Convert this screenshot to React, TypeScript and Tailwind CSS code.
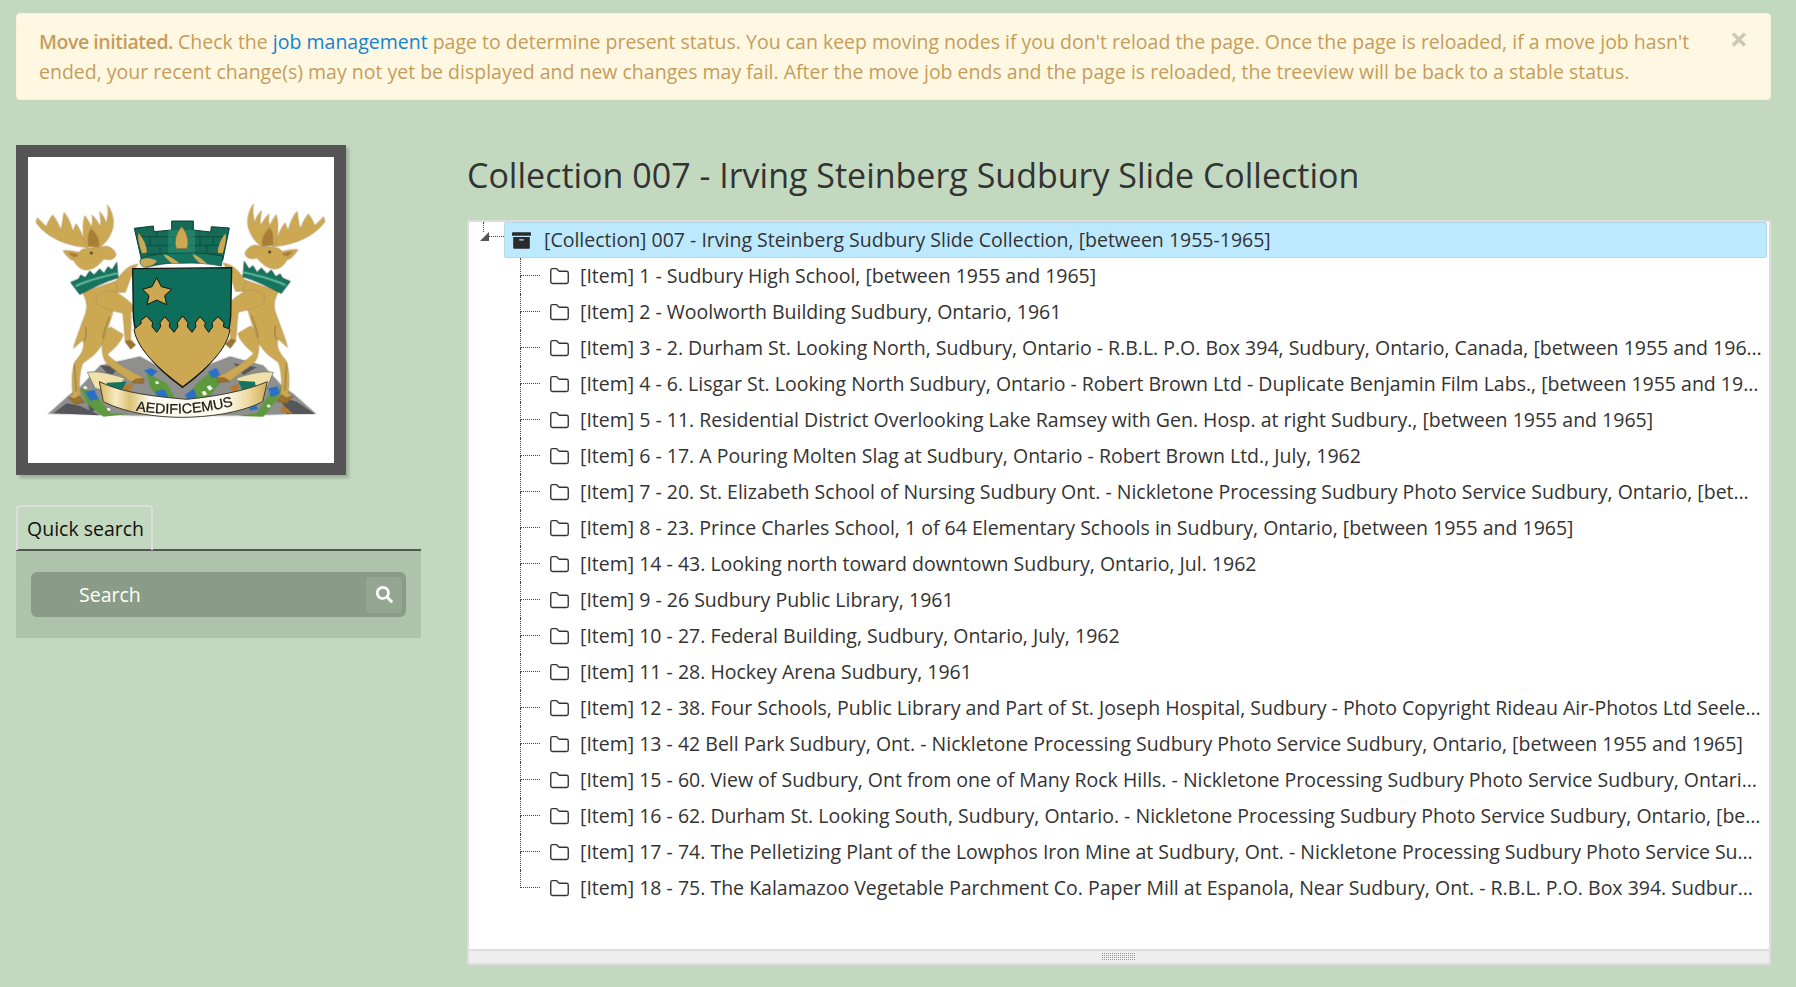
import { FaArchive, FaSearch } from "react-icons/fa";
import { Folder } from "lucide-react";

const items = [
  "[Item] 1 - Sudbury High School, [between 1955 and 1965]",
  "[Item] 2 - Woolworth Building Sudbury, Ontario, 1961",
  "[Item] 3 - 2. Durham St. Looking North, Sudbury, Ontario - R.B.L. P.O. Box 394, Sudbury, Ontario, Canada, [between 1955 and 1965]",
  "[Item] 4 - 6. Lisgar St. Looking North Sudbury, Ontario - Robert Brown Ltd - Duplicate Benjamin Film Labs., [between 1955 and 1965]",
  "[Item] 5 - 11. Residential District Overlooking Lake Ramsey with Gen. Hosp. at right Sudbury., [between 1955 and 1965]",
  "[Item] 6 - 17. A Pouring Molten Slag at Sudbury, Ontario - Robert Brown Ltd., July, 1962",
  "[Item] 7 - 20. St. Elizabeth School of Nursing Sudbury Ont. - Nickletone Processing Sudbury Photo Service Sudbury, Ontario, [between 1955 and 1965]",
  "[Item] 8 - 23. Prince Charles School, 1 of 64 Elementary Schools in Sudbury, Ontario, [between 1955 and 1965]",
  "[Item] 14 - 43. Looking north toward downtown Sudbury, Ontario, Jul. 1962",
  "[Item] 9 - 26 Sudbury Public Library, 1961",
  "[Item] 10 - 27. Federal Building, Sudbury, Ontario, July, 1962",
  "[Item] 11 - 28. Hockey Arena Sudbury, 1961",
  "[Item] 12 - 38. Four Schools, Public Library and Part of St. Joseph Hospital, Sudbury - Photo Copyright Rideau Air-Photos Ltd Seeley, Ontario",
  "[Item] 13 - 42 Bell Park Sudbury, Ont. - Nickletone Processing Sudbury Photo Service Sudbury, Ontario, [between 1955 and 1965]",
  "[Item] 15 - 60. View of Sudbury, Ont from one of Many Rock Hills. - Nickletone Processing Sudbury Photo Service Sudbury, Ontario, [between 1955 and 1965]",
  "[Item] 16 - 62. Durham St. Looking South, Sudbury, Ontario. - Nickletone Processing Sudbury Photo Service Sudbury, Ontario, [between 1955 and 1965]",
  "[Item] 17 - 74. The Pelletizing Plant of the Lowphos Iron Mine at Sudbury, Ont. - Nickletone Processing Sudbury Photo Service Sudbury, Ontario",
  "[Item] 18 - 75. The Kalamazoo Vegetable Parchment Co. Paper Mill at Espanola, Near Sudbury, Ont. - R.B.L. P.O. Box 394. Sudbury, Ontario",
];

const GOLD = "#cda853";
const GREEN = "#0f6e5c";

// one moose, left supporter; coordinates taken from a 3x crop
const Moose = () => (
  <g fill={GOLD} stroke="#a08a55" strokeWidth="1.5" strokeLinejoin="round">
    {/* rear hind leg */}
    <path d="M226 410 L248 396 L285 418 C282 436 264 456 238 478 C258 500 302 528 348 548 L345 565 L310 562 C285 538 250 522 232 500 C220 480 220 440 226 410Z" />
    {/* torso and front hind leg */}
    <path d="M163 292 C182 325 178 345 165 375 C155 405 142 435 136 460 L165 435 C172 462 158 480 142 498 C130 525 130 570 135 598 L120 606 L140 628 L168 622 L157 598 C152 570 154 530 164 505 C184 490 218 470 228 430 C240 400 250 370 260 330 C266 300 274 275 272 255Z" />
    {/* foreleg on the shield top */}
    <path d="M262 262 C280 235 295 212 330 207 L318 226 C308 245 300 270 292 292 L270 292Z" />
    {/* lower foreleg */}
    <path d="M205 305 C222 292 240 285 262 290 C287 305 307 320 320 337 L314 350 L308 350 C310 380 308 410 308 432 L322 450 L308 462 L292 440 C288 410 288 380 284 354 C258 348 222 342 205 322Z" />
    {/* antlers */}
    <path d="M182 157 C135 156 60 135 24 82 L28 68 C38 78 46 88 56 94 C58 84 64 72 74 60 C84 72 92 88 98 104 C104 88 104 68 108 52 C122 68 130 88 134 110 C138 102 140 94 144 86 C154 98 162 120 170 135 L176 155Z" />
    <path d="M172 152 C166 125 162 90 170 62 C180 74 186 86 190 96 C194 84 194 72 192 60 C204 72 212 84 216 96 C220 84 218 66 214 50 C226 60 232 74 234 86 C240 68 242 48 238 30 C252 48 260 74 254 100 C246 128 230 148 212 158Z" />
    <path d="M180 155 C178 130 180 110 190 100 C205 115 218 135 212 156Z" fill="#a97f38" stroke="none" />
    {/* head */}
    <path d="M105 167 C125 165 145 170 160 175 C158 190 145 198 130 195 C120 188 112 178 105 167Z" />
    <path d="M160 165 C175 155 200 160 225 155 C240 150 258 160 264 178 C262 192 245 198 228 192 C215 205 205 222 175 225 C155 225 140 205 135 190Z" />
    <path d="M120 172 C130 172 145 175 152 180 C145 190 132 188 120 172Z" fill="#a97f38" stroke="none" />
    <circle cx="190" cy="174" r="4" fill="#3c3420" stroke="none" />
    {/* collar crown */}
    <path d="M128 262 L152 252 L158 240 L172 248 L185 228 L198 240 L215 222 L228 235 L240 215 L252 225 L266 202 L270 248 C230 260 195 278 155 298Z" fill="#17755f" stroke="#0d3d33" strokeWidth="2" />
    <path d="M142 274 C180 255 225 245 268 235" fill="none" stroke="#62b89b" strokeWidth="6" />
    {/* body lines */}
    <path d="M172 395 C178 420 172 440 165 435 M225 430 C228 405 238 385 244 365 M138 505 C142 530 142 560 144 590" fill="none" stroke="#6b5b33" strokeWidth="2" />
    {/* hooves */}
    <path d="M120 606 L140 628 L168 622 L155 602 L140 612Z M310 562 L345 565 L348 550 L325 552Z M292 440 L308 462 L322 450 L305 436Z" fill="#9a7430" stroke="#5f4b24" />
  </g>
);

// coat of arms of the city, hand drawn
const CoatOfArms = () => (
  <svg viewBox="84 81 918 918" className="block w-[306px] h-[306px]">
    <defs>
      <linearGradient id="ribbon" x1="0" x2="1" y1="0" y2="0">
        <stop offset="0" stopColor="#d9b85e" />
        <stop offset="0.1" stopColor="#f6ebc4" />
        <stop offset="0.18" stopColor="#dcc273" />
        <stop offset="0.3" stopColor="#fdfaf0" />
        <stop offset="0.75" stopColor="#fdfaf0" />
        <stop offset="0.88" stopColor="#eedca4" />
        <stop offset="1" stopColor="#d2ae55" />
      </linearGradient>
      <filter id="soft">
        <feGaussianBlur stdDeviation="1.2" />
      </filter>
    </defs>
    <g filter="url(#soft)">
      {/* rocks */}
      <path d="M142 852 L212 790 L240 770 L300 705 L420 678 L470 705 L620 705 L690 678 L790 705 L850 770 L880 790 L950 852 L700 858 L400 858Z" fill="#8f8f8e" stroke="#e2e2e2" strokeWidth="3" />
      <path d="M160 850 L200 820 L240 828 L300 856Z M840 800 L890 815 L945 852 L860 852Z M300 706 L360 712 L330 740Z M700 700 L770 712 L730 735Z M260 800 L300 830 L270 850Z" fill="#55565a" />
      <path d="M840 845 L880 852 L850 825Z M360 770 L400 760 L385 795Z M690 770 L720 760 L705 800Z" fill="#b9792f" />
      {/* plants */}
      <path d="M440 730 L500 760 L525 805 L480 810 L450 770Z M640 720 L590 760 L560 810 L620 810 L660 760Z M240 775 L285 790 L330 850 L385 852 L310 860 L260 820Z M850 770 L810 790 L770 850 L710 858 L790 860 L830 810Z" fill="#5d9a3c" />
      <path d="M432 722 l20 -8 l20 10 l-16 16Z M465 785 l26 -8 l14 22 l-28 8Z M555 795 l26 -20 l10 30 l-26 8Z M625 725 l24 -12 l14 26 l-26 6Z M255 785 l28 -6 l12 28 l-24 6Z M805 775 l28 -6 l6 24 l-26 8Z M745 830 l24 -6 l4 14 l-22 4Z" fill="#2a6fc6" />
      <path d="M620 770 l10 -4 l8 10 l-10 6Z M605 785 l10 -2 l6 10 l-10 4Z M465 755 l8 -2 l4 8 l-8 2Z M250 770 l8 -2 l4 8 l-8 2Z M320 835 l8 -2 l4 8 l-8 2Z M800 825 l8 -2 l4 8 l-8 2Z" fill="#fff" />

      <g transform="translate(84 195)">
        <Moose />
      </g>
      <g transform="translate(999 192) scale(-1 1)">
        <Moose />
      </g>

      {/* mural crown */}
      <path d="M403 295 L460 288 L462 305 L515 300 L515 273 L580 273 L580 300 L632 306 L634 290 L688 294 L668 392 L425 392Z" fill="#136a57" stroke="#0d3d33" strokeWidth="3" />
      <path d="M420 320 L670 320 M432 346 L660 346 M440 372 L650 372 M470 305 L470 320 M520 320 L520 346 M480 346 L480 372 M600 320 L600 346 M620 346 L620 372 M450 320 L450 346 M640 320 L640 346" stroke="#0b4f40" strokeWidth="3" fill="none" />
      <path d="M505 300 L585 300 L585 375 L505 375Z" fill="#2f9a7c" opacity="0.5" />
      <path d="M545 290 C565 310 568 345 560 356 L530 356 C522 345 525 310 545 290Z" fill={GOLD} stroke="#7a6125" strokeWidth="2" />
      <path d="M415 310 C430 325 442 350 440 368 L426 370 C420 350 412 330 415 310Z M677 310 C664 325 652 350 654 368 L668 370 C674 350 680 330 677 310Z" fill={GOLD} />
      {/* wreath */}
      <path d="M430 382 C470 372 510 368 545 370 C590 366 630 372 668 378 L664 408 C620 400 590 398 545 400 C510 398 480 402 440 412 C420 412 412 390 430 382Z" fill="#17755f" stroke="#0d3d33" strokeWidth="2" />
      <path d="M425 388 C440 382 458 385 470 392 C468 402 450 410 432 410 C420 405 418 395 425 388Z M490 372 C510 378 525 388 538 400 L515 400 C505 390 495 382 490 372Z M578 372 C595 378 610 390 622 402 L600 400 C590 390 580 382 578 372Z" fill={GOLD} />
      {/* shield */}
      <path d="M398 416 L695 413 L692 560 C688 650 620 720 548 772 C475 720 405 650 400 560Z" fill={GREEN} stroke="#14140c" strokeWidth="4" />
      <path d="M402 598 L424 580 L422 572 L440 558 L458 578 L456 590 L470 607 L482 590 L480 578 L494 560 L510 578 L508 590 L522 607 L534 590 L532 578 L548 558 L564 578 L562 590 L576 607 L588 590 L586 578 L600 560 L616 578 L614 590 L626 607 L638 590 L636 578 L654 560 L672 578 L670 590 L690 598 C682 660 615 720 548 770 C480 720 412 660 402 598Z" fill={GOLD} stroke="#14140c" strokeWidth="3" strokeLinejoin="round" />
      <path d="M470 443 L484 470 L515 478 L494 497 L500 524 L470 510 L441 524 L447 497 L428 478 L456 470Z" fill={GOLD} stroke="#14140c" strokeWidth="3" strokeLinejoin="round" />
      {/* ribbon */}
      <path d="M262 727 C290 722 330 730 375 745 L340 790 L285 775Z" fill="#efe0ac" stroke="#6b6b5c" strokeWidth="2" />
      <path d="M820 727 C790 722 750 730 708 745 L745 790 L800 775Z" fill="#efe0ac" stroke="#6b6b5c" strokeWidth="2" />
      <path d="M320 758 L380 755 L360 790 L325 785Z M765 755 L715 752 L730 790 L770 785Z" fill="#17755f" />
      <path d="M298 755 C370 790 470 800 560 808 C640 800 730 785 802 755 L788 815 C720 850 620 862 545 862 C470 862 380 850 310 815Z" fill="url(#ribbon)" stroke="#3f3f35" strokeWidth="3" strokeLinejoin="round" />
    </g>
    <path id="motto" d="M407 842 Q555 866 704 826" fill="none" />
    <text fontFamily="'Liberation Sans', sans-serif" fontSize="42" fill="#1c1c16" stroke="#1c1c16" strokeWidth="0.8">
      <textPath href="#motto" textLength="296" lengthAdjust="spacingAndGlyphs">AEDIFICEMUS</textPath>
    </text>
  </svg>
);

const TreeRow = ({ label, last }: { label: string; last: boolean }) => (
  <div className="flex h-9 items-center">
    <div className="ml-[51px] flex h-9 w-5 flex-col">
      <div className="h-[18px] border-b border-l border-dotted border-[#444]" />
      {!last && <div className="h-[18px] border-l border-dotted border-[#444]" />}
    </div>
    <Folder strokeWidth={1.6} className="ml-[9px] h-[21px] w-[21px] shrink-0 text-[#333]" />
    <span className="ml-[10px] mr-[5px] min-w-0 flex-1 truncate">{label}</span>
  </div>
);

export default function App() {
  return (
    <div className="h-[987px] w-full overflow-hidden bg-[#c3d9bf] pl-4 pr-[25px] pt-[13px] font-['Open_Sans',sans-serif] text-[19.5px] text-[#333]">
      <div className="relative h-[87px] rounded-[4px] border border-[#fcf0d6] bg-[#fef8e3] pl-[22px] pr-[60px] pt-[13px] leading-[30px] text-[#c69c5b]">
        <strong className="font-semibold tracking-[-0.45px]">Move initiated.</strong> Check the <a className="text-[#1583d0]">job management</a> page to determine present status. You can keep moving nodes if you don't reload the page. Once the page is reloaded, if a move job hasn't ended, your recent change(s) may not yet be displayed and new changes may fail. After the move job ends and the page is reloaded, the treeview will be back to a stable status.
        <span className="absolute right-[22px] top-[3px] text-[32px] font-bold leading-[44px] text-[#cbc8b6]">×</span>
      </div>

      <div className="mt-[45px] flex gap-[46px]">
        <div className="w-[405px] shrink-0">
          <div className="w-[330px] border-[12px] border-[#555] bg-white shadow-[3px_3px_3px_rgba(0,0,0,0.2)]">
            <CoatOfArms />
          </div>
          <div className="mt-[30px] border-b-2 border-[#555]">
            <div className="-mb-px inline-block h-[45px] rounded-t-[4px] border-2 border-b-0 border-[#dddddd] pl-[9px] pr-[7px] leading-[44px] text-[#111]">Quick search</div>
          </div>
          <div className="h-[87px] bg-[#aec4aa] px-[15px] pt-[21px]">
            <div className="flex h-[45px] items-center rounded-[6px] bg-[#8a9c87] pl-12 pr-1 text-white">
              <span className="flex-1">Search</span>
              <span className="flex h-9 w-9 items-center justify-center rounded-[4px] bg-[#94a691]">
                <FaSearch className="h-[17px] w-[17px] text-white" />
              </span>
            </div>
          </div>
        </div>

        <div className="w-[1304px] shrink-0">
          <h1 className="mb-[22px] h-[53px] text-[34px] font-normal leading-[61px] text-[#333]">Collection 007 - Irving Steinberg Sudbury Slide Collection</h1>
          <div className="border-x-2 border-t-2 border-[#dddddd] bg-white">
            <div className="h-[727px] pr-[2px]">
              <div className="flex h-9 items-center">
                <div className="ml-[11px] flex h-9 w-6 flex-col">
                  <div className="ml-[3px] h-[10px] border-l border-dotted border-[#444]" />
                  <div className="flex items-end">
                    <svg viewBox="0 0 9 9" className="h-[9px] w-[9px] shrink-0 fill-[#555]"><path d="M9 0V9H0Z" /></svg>
                    <div className="mb-1 h-0 flex-1 border-b border-dotted border-[#444]" />
                  </div>
                </div>
                <div className="flex h-9 flex-1 items-center rounded-[2px] border border-[#b2d8ea] bg-[#bde9ff]">
                  <FaArchive className="ml-[7px] h-[19px] w-[19px] text-[#2b2b2b]" />
                  <span className="ml-[13px]">[Collection] 007 - Irving Steinberg Sudbury Slide Collection, [between 1955-1965]</span>
                </div>
              </div>
              {items.map((label, i) => (
                <TreeRow key={label} label={label} last={i === items.length - 1} />
              ))}
            </div>
            <div className="flex h-4 items-center justify-center border-y-2 border-[#dddddd] bg-[#eeeeee]">
              <svg width="34" height="8" className="block">
                <defs>
                  <pattern id="grip" width="2" height="2" patternUnits="userSpaceOnUse">
                    <rect width="1" height="1" fill="#999" />
                  </pattern>
                </defs>
                <rect width="34" height="8" fill="url(#grip)" />
              </svg>
            </div>
          </div>
        </div>
      </div>
    </div>
  );
}
